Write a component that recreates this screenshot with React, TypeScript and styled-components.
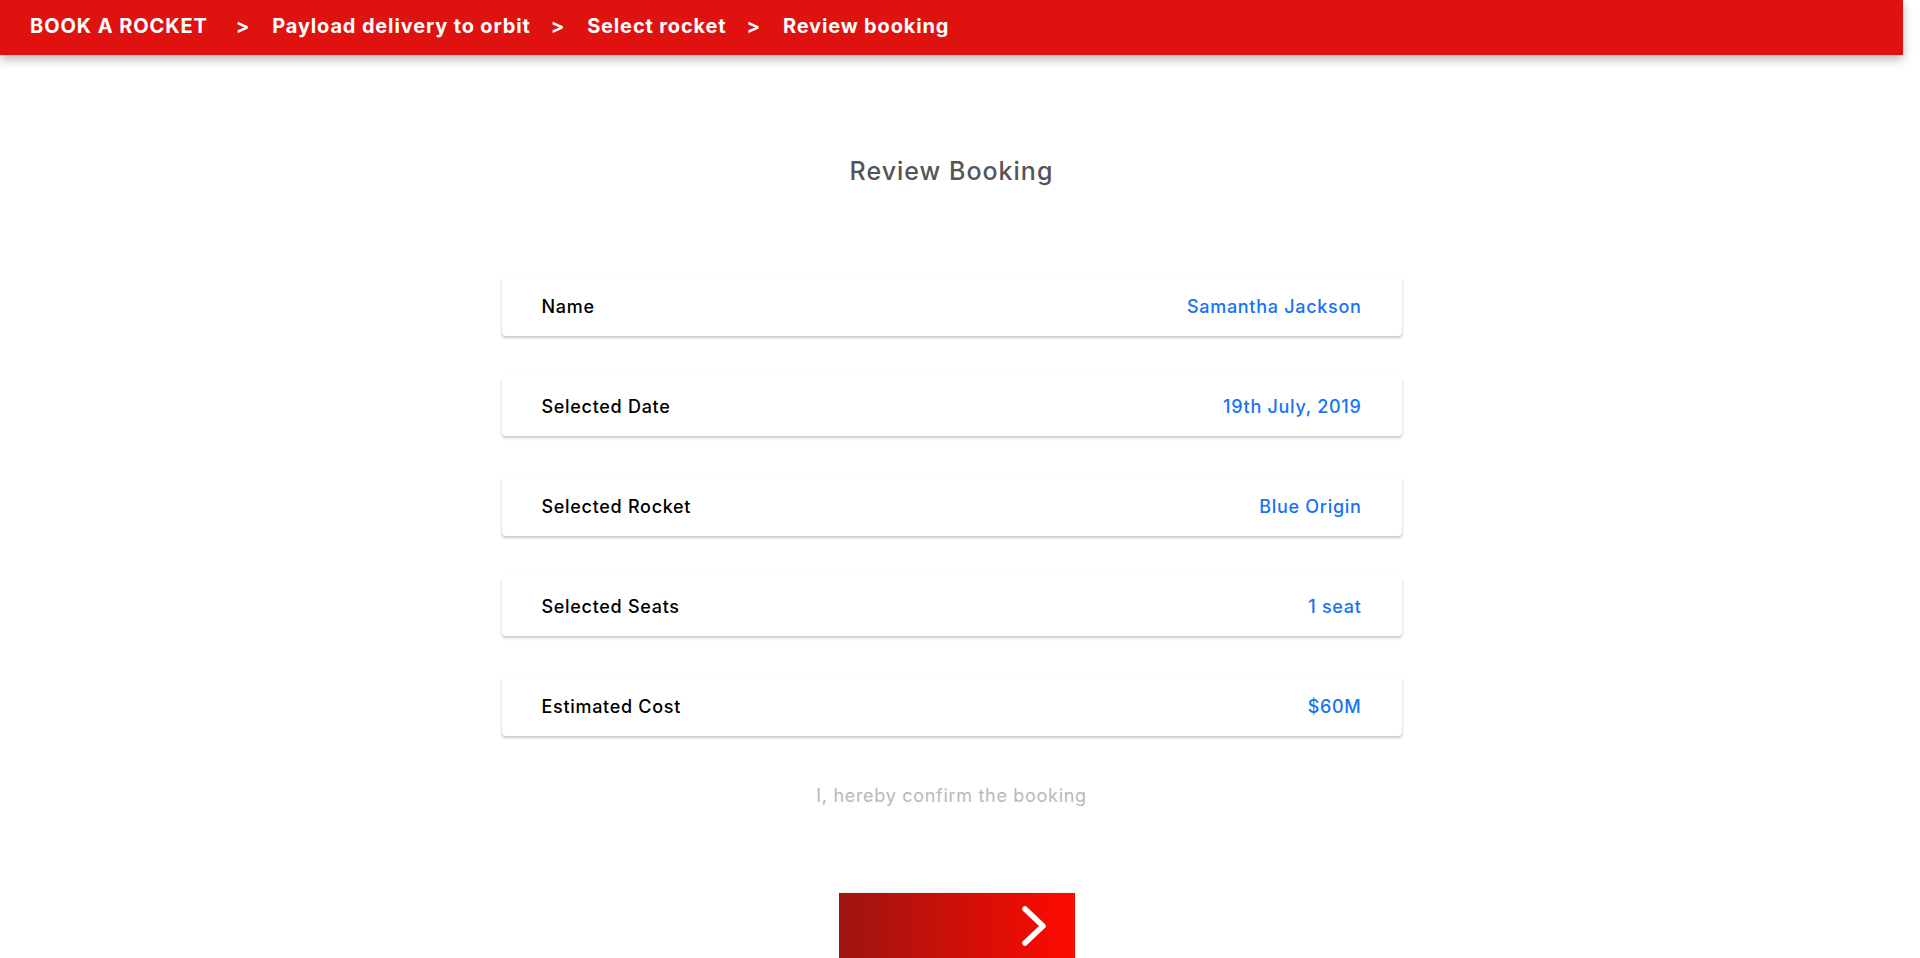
import styled, {createGlobalStyle} from 'styled-components';

const GlobalStyle = createGlobalStyle`
  html, body {
    margin: 0;
    padding: 0;
    background: #ffffff;
    font-family: Inter, "Open Sans", sans-serif;
  }
`;

interface BookingRow {
  label: string;
  value: string;
}

const rows: BookingRow[] = [
  {label: 'Name', value: 'Samantha Jackson'},
  {label: 'Selected Date', value: '19th July, 2019'},
  {label: 'Selected Rocket', value: 'Blue Origin'},
  {label: 'Selected Seats', value: '1 seat'},
  {label: 'Estimated Cost', value: '$60M'},
];

const steps = ['Payload delivery to orbit', 'Select rocket', 'Review booking'];

export default function App() {
  return (
    <>
      <GlobalStyle />
      <Page>
        <Header>
          <Brand>BOOK A ROCKET</Brand>
          {steps.map((step) => (
            <Crumb key={step}>
              <Separator>&gt;</Separator>
              {step}
            </Crumb>
          ))}
        </Header>
        <Main>
          <Title>Review Booking</Title>
          <CardList>
            {rows.map((row) => (
              <Card key={row.label}>
                <Label>{row.label}</Label>
                <Value>{row.value}</Value>
              </Card>
            ))}
          </CardList>
          <Confirm>I, hereby confirm the booking</Confirm>
          <NextButton aria-label="Confirm booking">
            <svg width="27" height="42" viewBox="0 0 27 42">
              <polyline
                points="4,4 22,21 4,38"
                fill="none"
                stroke="#ffffff"
                strokeWidth="5.5"
                strokeLinecap="round"
                strokeLinejoin="round"
              />
            </svg>
          </NextButton>
        </Main>
      </Page>
    </>
  );
}

const Page = styled.div`
  min-height: 1880px;
  display: flex;
  flex-direction: column;
`;

const Header = styled.header`
  height: 55px;
  box-sizing: border-box;
  margin-right: 17px;
  background: #e0120f;
  box-shadow: 0 4px 10px rgba(0, 0, 0, 0.3);
  display: flex;
  align-items: center;
  padding: 0 0 4px 30px;
  color: #ffffff;
  font-weight: 700;
  font-size: 20px;
  letter-spacing: 0.85px;
`;

const Brand = styled.span`
  letter-spacing: 0.9px;
  margin-right: 8px;
  white-space: nowrap;
`;

const Crumb = styled.span`
  display: flex;
  align-items: center;
  white-space: nowrap;
`;

const Separator = styled.span`
  margin: 0 22px 0 20px;
`;

const Main = styled.main`
  display: flex;
  flex-direction: column;
  align-items: center;
  padding-right: 17px;
`;

const Title = styled.h1`
  margin: 101px 0 0;
  font-size: 25px;
  line-height: 30px;
  font-weight: 500;
  letter-spacing: 1px;
  color: #555555;
`;

const CardList = styled.div`
  margin-top: 90px;
  width: 900px;
  display: flex;
  flex-direction: column;
  gap: 40px;
`;

const Card = styled.div`
  height: 60px;
  box-sizing: border-box;
  padding: 0 40px;
  display: flex;
  align-items: center;
  justify-content: space-between;
  background: #ffffff;
  border-radius: 4px;
  box-shadow: 0 2px 3px rgba(0, 0, 0, 0.22), 0 0 2px rgba(0, 0, 0, 0.05);
  font-size: 18px;
  font-weight: 500;
  letter-spacing: 0.7px;
`;

const Label = styled.span`
  color: #000000;
`;

const Value = styled.span`
  color: #1673f6;
`;

const Confirm = styled.p`
  margin: 48px 0 0;
  font-size: 18px;
  line-height: 24px;
  letter-spacing: 0.7px;
  color: #b9b9b9;
`;

const NextButton = styled.button`
  margin: 85px 0 0 10px;
  width: 236px;
  height: 66px;
  border: none;
  padding: 0 27px 0 0;
  display: flex;
  align-items: center;
  justify-content: flex-end;
  background: linear-gradient(to right, #9c1510, #ff0a00);
  box-shadow: 0 -1px 2px rgba(0, 0, 0, 0.08);
  cursor: pointer;
`;
